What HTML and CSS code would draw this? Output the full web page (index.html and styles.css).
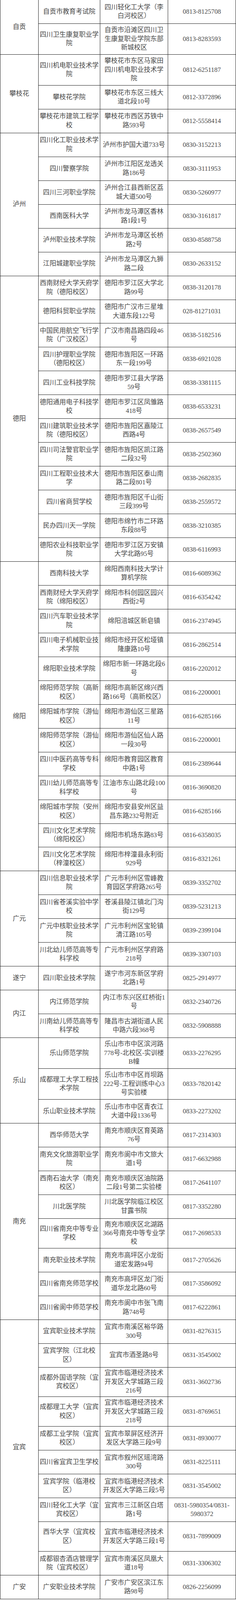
FILE: index.html
```html
<!DOCTYPE html>
<html lang="zh-CN">
<head>
<meta charset="utf-8">
<title>考点信息</title>
<link rel="stylesheet" href="styles.css">
</head>
<body>
<div class="sheet">

<section class="group first">
  <div class="city">自贡</div>
  <div class="rows">
    <div class="row"><div class="cell name">自贡市教育考试院</div><div class="cell addr">四川轻化工大学（李白河校区）</div><div class="cell tel">0813-8125708</div></div>
    <div class="row h81"><div class="cell name">四川卫生康复职业学院</div><div class="cell addr">自贡市沿滩区四川卫生康复职业学院东部新城校区</div><div class="cell tel">0813-8283593</div></div>
  </div>
</section>

<section class="group">
  <div class="city">攀枝花</div>
  <div class="rows">
    <div class="row h81"><div class="cell name">四川机电职业技术学院</div><div class="cell addr">攀枝花市东区马家田四川机电职业技术学院</div><div class="cell tel">0812-6251187</div></div>
    <div class="row"><div class="cell name">攀枝花学院</div><div class="cell addr">攀枝花市东区三线大道北段10号</div><div class="cell tel">0812-3372896</div></div>
    <div class="row"><div class="cell name">攀枝花市建筑工程学校</div><div class="cell addr">攀枝花市西区苏铁中路593号</div><div class="cell tel">0812-5558414</div></div>
  </div>
</section>

<section class="group">
  <div class="city">泸州</div>
  <div class="rows">
    <div class="row"><div class="cell name">四川化工职业技术学院</div><div class="cell addr">泸州市护国大道733号</div><div class="cell tel">0830-3152213</div></div>
    <div class="row"><div class="cell name">四川警察学院</div><div class="cell addr">泸州市江阳区龙透关路186号</div><div class="cell tel">0830-3111953</div></div>
    <div class="row"><div class="cell name">四川三河职业学院</div><div class="cell addr">泸州合江县西新区荔城大道500号</div><div class="cell tel">0830-5260977</div></div>
    <div class="row"><div class="cell name">西南医科大学</div><div class="cell addr">泸州市龙马潭区香林路1段1号</div><div class="cell tel">0830-3161817</div></div>
    <div class="row"><div class="cell name">泸州职业技术学院</div><div class="cell addr">泸州市龙马潭区长桥路2号</div><div class="cell tel">0830-8588758</div></div>
    <div class="row"><div class="cell name">江阳城建职业学院</div><div class="cell addr">泸州市龙马潭区九狮路二段</div><div class="cell tel">0830-2633152</div></div>
  </div>
</section>

<section class="group">
  <div class="city">德阳</div>
  <div class="rows">
    <div class="row"><div class="cell name">西南财经大学天府学院（德阳校区）</div><div class="cell addr">德阳市罗江区大学北路99号</div><div class="cell tel">0838-3120178</div></div>
    <div class="row"><div class="cell name">德阳科贸职业学院</div><div class="cell addr">德阳市广汉市三星堆大道东段122号</div><div class="cell tel">028-81271031</div></div>
    <div class="row"><div class="cell name">中国民用航空飞行学院（广汉校区）</div><div class="cell addr">广汉市南昌路四段46号</div><div class="cell tel">0838-5182516</div></div>
    <div class="row"><div class="cell name">四川护理职业学院（德阳校区）</div><div class="cell addr">德阳市旌阳区一环路东一段199号</div><div class="cell tel">0838-6921028</div></div>
    <div class="row"><div class="cell name">四川工业科技学院</div><div class="cell addr">德阳市罗江县大学路59号</div><div class="cell tel">0838-3381115</div></div>
    <div class="row"><div class="cell name">德阳通用电子科技学校</div><div class="cell addr">德阳市罗江区凤雏路418号</div><div class="cell tel">0838-6533231</div></div>
    <div class="row"><div class="cell name">四川建筑职业技术学院（德阳校区）</div><div class="cell addr">德阳市旌阳区嘉陵江西路4号</div><div class="cell tel">0838-2657549</div></div>
    <div class="row"><div class="cell name">四川司法警官职业学院</div><div class="cell addr">德阳市旌阳区凯江路二段32号</div><div class="cell tel">0838-2502360</div></div>
    <div class="row"><div class="cell name">四川工程职业技术大学</div><div class="cell addr">德阳市旌阳区泰山南路二段801号</div><div class="cell tel">0838-2682835</div></div>
    <div class="row"><div class="cell name">四川省商贸学校</div><div class="cell addr">德阳市旌阳区千山街三段399号</div><div class="cell tel">0838-2559572</div></div>
    <div class="row"><div class="cell name">民办四川天一学院</div><div class="cell addr">德阳市绵竹市二环路东段88号</div><div class="cell tel">0838-3210385</div></div>
    <div class="row"><div class="cell name">德阳农业科技职业学院</div><div class="cell addr">德阳市罗江区万安镇大学北路95号</div><div class="cell tel">0838-6116993</div></div>
  </div>
</section>

<section class="group">
  <div class="city">绵阳</div>
  <div class="rows">
    <div class="row"><div class="cell name">西南科技大学</div><div class="cell addr">绵阳西南科技大学计算机学院</div><div class="cell tel">0816-6089362</div></div>
    <div class="row"><div class="cell name">西南财经大学天府学院（绵阳校区）</div><div class="cell addr">绵阳市科创园区园兴西街2号</div><div class="cell tel">0816-6354242</div></div>
    <div class="row"><div class="cell name">四川汽车职业技术学院</div><div class="cell addr">绵阳涪城区新皂镇</div><div class="cell tel">0816-2374945</div></div>
    <div class="row"><div class="cell name">四川电子机械职业技术学院</div><div class="cell addr">绵阳市经开区松垭镇隆康路10号</div><div class="cell tel">0816-2862514</div></div>
    <div class="row"><div class="cell name">绵阳职业技术学院</div><div class="cell addr">绵阳市新一环路北段6号</div><div class="cell tel">0816-2202012</div></div>
    <div class="row"><div class="cell name">绵阳师范学院（高新校区）</div><div class="cell addr">绵阳市高新区绵兴西路166号（高新校区）</div><div class="cell tel">0816-2200001</div></div>
    <div class="row"><div class="cell name">绵阳城市学院（游仙校区）</div><div class="cell addr">绵阳市游仙区三星路11号</div><div class="cell tel">0816-6285166</div></div>
    <div class="row"><div class="cell name">绵阳师范学院（游仙校区）</div><div class="cell addr">绵阳市游仙区仙人路一段30号</div><div class="cell tel">0816-2200001</div></div>
    <div class="row"><div class="cell name">四川中医药高等专科学校</div><div class="cell addr">绵阳市教育园区教育中路1号</div><div class="cell tel">0816-2389644</div></div>
    <div class="row"><div class="cell name">四川幼儿师范高等专科学校</div><div class="cell addr">江油市东山路北段100号</div><div class="cell tel">0816-3690820</div></div>
    <div class="row"><div class="cell name">绵阳城市学院（安州校区）</div><div class="cell addr">绵阳市安县安州区益昌东路232号附近</div><div class="cell tel">0816-6285166</div></div>
    <div class="row"><div class="cell name">四川文化艺术学院（绵阳校区）</div><div class="cell addr">绵阳市机场东路83号</div><div class="cell tel">0816-6358035</div></div>
    <div class="row"><div class="cell name">四川文化艺术学院（梓潼校区）</div><div class="cell addr">绵阳市梓潼县永利街929号</div><div class="cell tel">0816-8321261</div></div>
  </div>
</section>

<section class="group">
  <div class="city">广元</div>
  <div class="rows">
    <div class="row"><div class="cell name">四川信息职业技术学院</div><div class="cell addr">广元市利州区雪峰教育园区学府路265号</div><div class="cell tel">0839-3352702</div></div>
    <div class="row"><div class="cell name">四川省苍溪实验中学校</div><div class="cell addr">苍溪县陵江镇北门沟街129号</div><div class="cell tel">0839-5231213</div></div>
    <div class="row"><div class="cell name">广元中核职业技术学院</div><div class="cell addr">广元市利州区宝轮镇清江路105号</div><div class="cell tel">0839-2399104</div></div>
    <div class="row"><div class="cell name">川北幼儿师范高等专科学校</div><div class="cell addr">广元市利州区学府路218号</div><div class="cell tel">0839-3307103</div></div>
  </div>
</section>

<section class="group">
  <div class="city">遂宁</div>
  <div class="rows">
    <div class="row"><div class="cell name">四川职业技术学院</div><div class="cell addr">遂宁市河东新区学府北路1号</div><div class="cell tel">0825-2914977</div></div>
  </div>
</section>

<section class="group">
  <div class="city">内江</div>
  <div class="rows">
    <div class="row"><div class="cell name">内江师范学院</div><div class="cell addr">内江市东兴区红桥街1号</div><div class="cell tel">0832-2340726</div></div>
    <div class="row"><div class="cell name">川南幼儿师范高等专科学校</div><div class="cell addr">隆昌市古湖街道人民中路六段368号</div><div class="cell tel">0832-5908888</div></div>
  </div>
</section>

<section class="group">
  <div class="city">乐山</div>
  <div class="rows">
    <div class="row h81"><div class="cell name">乐山师范学院</div><div class="cell addr">乐山市市中区滨河路778号-北校区-实训楼B幢</div><div class="cell tel">0833-2276295</div></div>
    <div class="row h81"><div class="cell name">成都理工大学工程技术学院</div><div class="cell addr">乐山市市中区肖坝路222号-工程训练中心3号实验楼</div><div class="cell tel">0833-7820142</div></div>
    <div class="row"><div class="cell name">乐山职业技术学院</div><div class="cell addr">乐山市市中区青衣江大道中段1336号</div><div class="cell tel">0833-2273202</div></div>
  </div>
</section>

<section class="group">
  <div class="city">南充</div>
  <div class="rows">
    <div class="row"><div class="cell name">西华师范大学</div><div class="cell addr">南充市顺庆区育英路76号</div><div class="cell tel">0817-2314303</div></div>
    <div class="row"><div class="cell name">南充文化旅游职业学院</div><div class="cell addr">南充市阆中市文旅大道1号</div><div class="cell tel">0817-6632988</div></div>
    <div class="row"><div class="cell name">西南石油大学（南充校区）</div><div class="cell addr">南充市顺庆区油院路二段1号第二实验楼</div><div class="cell tel">0817-2641107</div></div>
    <div class="row"><div class="cell name">川北医学院</div><div class="cell addr">川北医学院临江校区甘露书院</div><div class="cell tel">0817-3352280</div></div>
    <div class="row h78"><div class="cell name">四川省南充中等专业学校</div><div class="cell addr">南充市顺庆区北湖路366号南充中等专业学校</div><div class="cell tel">0817-2698533</div></div>
    <div class="row"><div class="cell name">南充职业技术学院</div><div class="cell addr">南充市高坪区小龙街道宏发路94号</div><div class="cell tel">0817-2705626</div></div>
    <div class="row"><div class="cell name">四川省南充师范学校</div><div class="cell addr">南充市高坪区龙门街道华龙北路60号</div><div class="cell tel">0817-3586092</div></div>
    <div class="row"><div class="cell name">四川省阆中师范学校</div><div class="cell addr">南充市阆中市张飞南路748号</div><div class="cell tel">0817-6222861</div></div>
  </div>
</section>

<section class="group">
  <div class="city">宜宾</div>
  <div class="rows">
    <div class="row"><div class="cell name">宜宾职业技术学院</div><div class="cell addr">宜宾市南溪区裕华路300号</div><div class="cell tel">0831-8276315</div></div>
    <div class="row"><div class="cell name">宜宾学院（江北校区）</div><div class="cell addr">宜宾市酒圣路8号</div><div class="cell tel">0831-3545002</div></div>
    <div class="row h78"><div class="cell name">成都外国语学院（宜宾校区）</div><div class="cell addr">宜宾市临港经济技术开发区大学城路三段216号</div><div class="cell tel">0831-3602736</div></div>
    <div class="row h78"><div class="cell name">成都理工大学（宜宾校区）</div><div class="cell addr">宜宾市临港经济技术开发区大学城路三段218号</div><div class="cell tel">0831-8769651</div></div>
    <div class="row"><div class="cell name">成都工业学院（宜宾校区）</div><div class="cell addr">宜宾市翠屏区经济开发区大学路三段9号</div><div class="cell tel">0831-8930077</div></div>
    <div class="row"><div class="cell name">四川省宜宾卫生学校</div><div class="cell addr">宜宾市叙州区瑶湾路300号</div><div class="cell tel">0831-8225111</div></div>
    <div class="row"><div class="cell name">宜宾学院（临港校区）</div><div class="cell addr">宜宾市临港经济技术开发区大学路三段5号</div><div class="cell tel">0831-3545002</div></div>
    <div class="row"><div class="cell name">四川轻化工大学（宜宾校区）</div><div class="cell addr">宜宾市三江新区白塔路1号</div><div class="cell tel">0831-5980354/0831-<br>5980372</div></div>
    <div class="row h78"><div class="cell name">西华大学（宜宾校区）</div><div class="cell addr">宜宾市临港经济技术开发区大学路三段1号</div><div class="cell tel">0831-7899009</div></div>
    <div class="row"><div class="cell name">成都银杏酒店管理学院（宜宾校区）</div><div class="cell addr">宜宾市南溪区凤凰大道18号</div><div class="cell tel">0831-3306302</div></div>
  </div>
</section>

<section class="group">
  <div class="city">广安</div>
  <div class="rows">
    <div class="row"><div class="cell name">广安职业技术学院</div><div class="cell addr">广安市广安区滨江东路98号</div><div class="cell tel">0826-2256099</div></div>
  </div>
</section>

</div>
</body>
</html>
```

FILE: styles.css
```css
html, body {
  margin: 0;
  padding: 0;
  background: #ffffff;
}

.sheet {
  width: 605px;
  font-family: "Liberation Serif", "Noto Sans CJK SC", serif;
  font-size: 16.8px;
  line-height: 22.4px;
  color: #474747;
}

.group {
  display: flex;
}

.city {
  box-sizing: border-box;
  width: 99px;
  flex: 0 0 99px;
  border-left: 1px solid #1e1e1e;
  border-right: 1px solid #1e1e1e;
  border-bottom: 1px solid #1e1e1e;
  display: flex;
  align-items: center;
  justify-content: center;
  text-align: center;
}

.rows {
  flex: 1 1 auto;
  display: flex;
  flex-direction: column;
}

.row {
  box-sizing: border-box;
  height: 60.96px;
  flex: 0 0 auto;
  min-height: 0;
  display: grid;
  grid-template-columns: 158px 174px 174px;
}

.row.h81 { height: 79px; }
.row.h78 { height: 75.9px; }

.cell {
  box-sizing: border-box;
  border-right: 1px solid #1e1e1e;
  border-bottom: 1px solid #1e1e1e;
  display: flex;
  align-items: center;
  justify-content: center;
  text-align: center;
  overflow: hidden;
  padding: 0 2px;
}

.cell.addr {
  padding: 0 6px;
}

.cell.tel {
  padding: 0 4px;
}
```
